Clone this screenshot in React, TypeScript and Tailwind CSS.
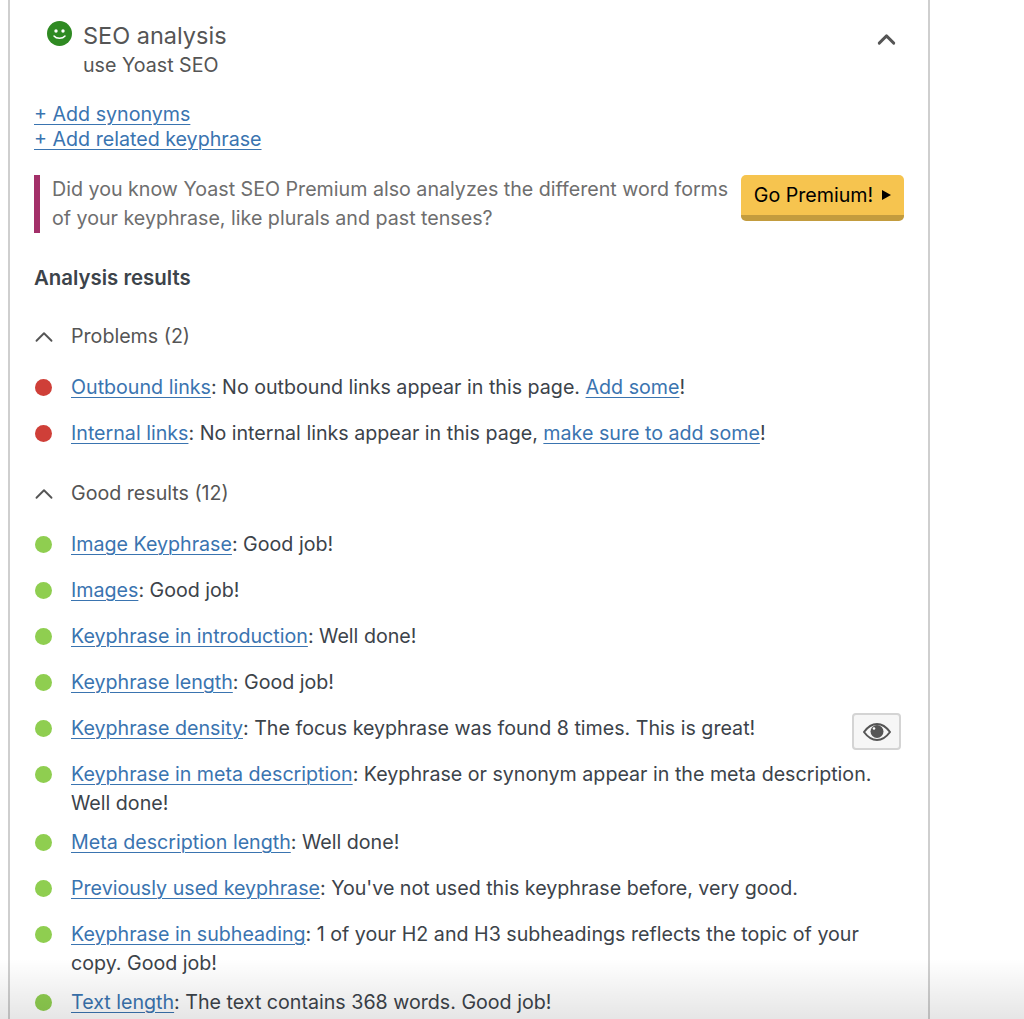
import { ChevronUp } from 'lucide-react'

const font = { fontFamily: 'Inter, "Liberation Sans", sans-serif' }

function Link({ children }: { children: React.ReactNode }) {
  return <a className="text-[#3a74b0] underline underline-offset-[3px] decoration-1">{children}</a>
}

function Result({
  color,
  title,
  children,
  eye,
}: {
  color: string
  title: string
  children: React.ReactNode
  eye?: boolean
}) {
  return (
    <div className="relative flex min-h-[46px] items-start py-[5px] pr-[30px]">
      <span className={`ml-[1px] mt-[6px] h-[17px] w-[17px] shrink-0 rounded-full ${color}`} />
      <p className="ml-[19px] text-[#3c434a]">
        <Link>{title}</Link>
        {children}
      </p>
      {eye && (
        <button className="absolute right-[3px] top-[4.500px] flex h-[37px] w-[49px] items-center justify-center rounded-[4px] border-2 border-[#d4d4d4] bg-[#f6f6f6]">
          <svg width="28" height="18" viewBox="0 0 28 18">
            <path d="M1 9C5 3.500 9 1 14 1s9 2.500 13 8c-4 5.500-8 8-13 8S5 14.500 1 9Z" fill="none" stroke="#555" strokeWidth="2" />
            <circle cx="14" cy="8.500" r="6.500" fill="#555" />
            <circle cx="11" cy="5.500" r="1.300" fill="#fff" />
          </svg>
        </button>
      )}
    </div>
  )
}

function GroupHeader({ label }: { label: string }) {
  return (
    <div className="flex h-[29px] items-center text-[#555]">
      <ChevronUp size={30} strokeWidth={1.500} className="ml-[-5px] text-[#555]" />
      <span className="ml-[12px]">{label}</span>
    </div>
  )
}

export default function App() {
  const red = 'bg-[#cf3f38]'
  const green = 'bg-[#8fce50]'
  return (
    <div style={font} className="relative h-[1019px] w-[1024px] overflow-hidden bg-white text-[19.650px] leading-[29px]">
      <div className="ml-[8px] h-full w-[922px] border-x-2 border-[#cfcfcf] pl-[24px] pr-[24px]">
        <div className="flex h-[90px] items-start">
          <span className="ml-[13px] mt-[21px] flex h-[25px] w-[25px] shrink-0 items-center justify-center rounded-full bg-[#2f8a22]">
            <svg width="25" height="25" viewBox="0 0 25 25">
              <circle cx="9" cy="10" r="1.700" fill="#fff" />
              <circle cx="16" cy="10" r="1.700" fill="#fff" />
              <path d="M7 15c2.500 3 8.500 3 11 0" stroke="#fff" strokeWidth="1.500" fill="none" strokeLinecap="round" />
            </svg>
          </span>
          <div className="ml-[11px] mt-[21px] text-[#555]">
            <div className="text-[23.500px] leading-[30px]">SEO analysis</div>
            <div className="leading-[29px]">use Yoast SEO</div>
          </div>
          <ChevronUp size={29} strokeWidth={2.400} className="ml-auto mr-[3px] mt-[25px] text-[#555]" />
        </div>

        <div className="mt-[12px] leading-[25px]">
          <div>
            <Link>+ Add synonyms</Link>
          </div>
          <div>
            <Link>+ Add related keyphrase</Link>
          </div>
        </div>

        <div className="mt-[23px] flex h-[58px] items-start">
          <div className="h-[58px] w-[6px] shrink-0 bg-[#a33069]" />
          <p className="ml-[12px] w-[690px] shrink-0 text-[#6e6e6e]">
            Did you know Yoast SEO Premium also analyzes the different word forms of your keyphrase, like plurals and past tenses?
          </p>
          <button className="ml-[-1px] flex h-[46px] w-[163px] shrink-0 items-center justify-center gap-[9px] rounded-[5px] border-b-[6px] border-[#c39c3e] bg-[#f6c44f] text-black">
            Go Premium!
            <span className="h-0 w-0 border-y-[5px] border-l-[9px] border-y-transparent border-l-black" />
          </button>
        </div>

        <h3 className="mt-[30px] text-[20.400px] font-semibold text-[#3c434a]">Analysis results</h3>

        <div className="mt-[30px]">
          <GroupHeader label="Problems (2)" />
        </div>
        <div className="mt-[17px]">
          <Result color={red} title="Outbound links">
            : No outbound links appear in this page. <Link>Add some</Link>!
          </Result>
          <Result color={red} title="Internal links">
            : No internal links appear in this page, <Link>make sure to add some</Link>!
          </Result>
        </div>

        <div className="mt-[19px]">
          <GroupHeader label="Good results (12)" />
        </div>
        <div className="mt-[16.500px]">
          <Result color={green} title="Image Keyphrase">: Good job!</Result>
          <Result color={green} title="Images">: Good job!</Result>
          <Result color={green} title="Keyphrase in introduction">: Well done!</Result>
          <Result color={green} title="Keyphrase length">: Good job!</Result>
          <Result color={green} title="Keyphrase density" eye>
            : The focus keyphrase was found 8 times. This is great!
          </Result>
          <Result color={green} title="Keyphrase in meta description">
            : Keyphrase or synonym appear in the meta description. Well done!
          </Result>
          <Result color={green} title="Meta description length">: Well done!</Result>
          <Result color={green} title="Previously used keyphrase">: You've not used this keyphrase before, very good.</Result>
          <Result color={green} title="Keyphrase in subheading">
            : 1 of your H2 and H3 subheadings reflects the topic of your copy. Good job!
          </Result>
          <Result color={green} title="Text length">: The text contains 368 words. Good job!</Result>
        </div>
      </div>
      <div className="pointer-events-none absolute inset-x-0 bottom-0 h-[60px] bg-gradient-to-b from-transparent to-black/10" />
    </div>
  )
}
